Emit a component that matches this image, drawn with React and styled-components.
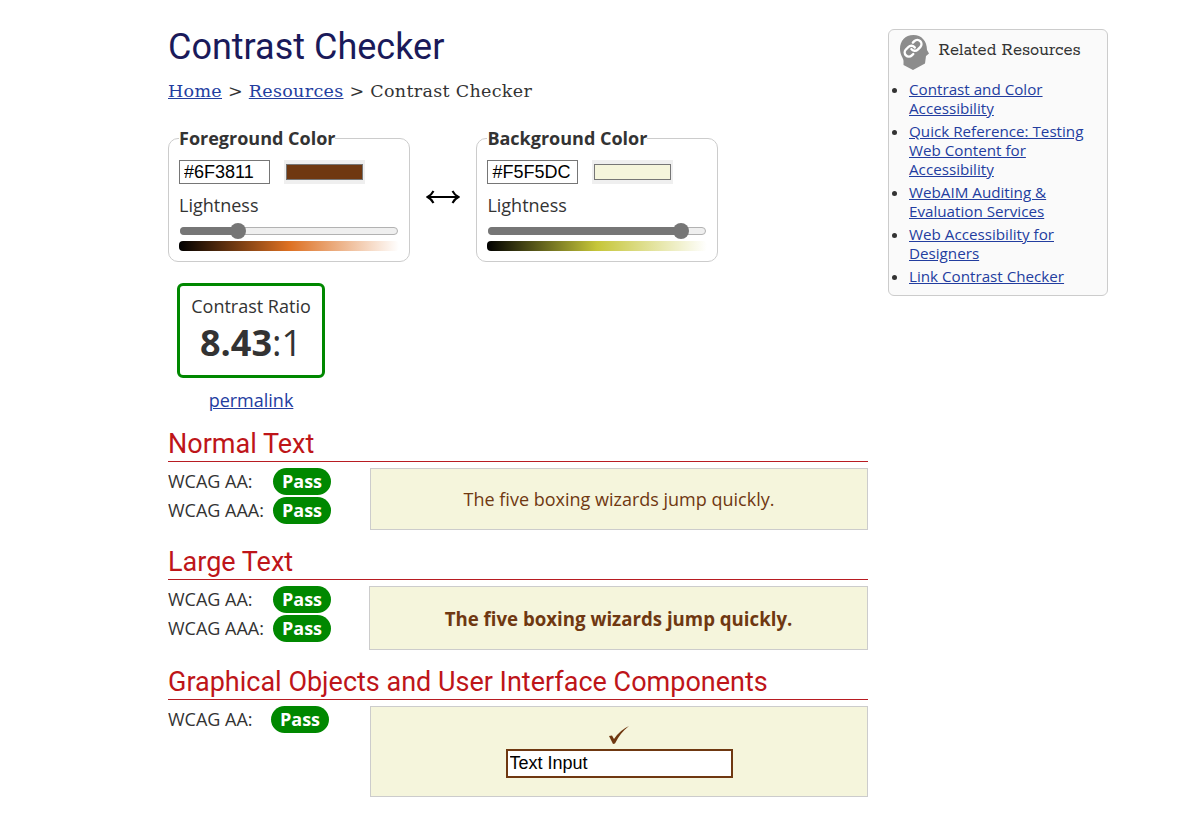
import React from "react";
import styled, { createGlobalStyle } from "styled-components";

const Global = createGlobalStyle`
  * { box-sizing: border-box; }
  body { margin: 0; background: #fff; color: #333; font: 18px/27px "Open Sans", sans-serif; }
  a { color: #233d9f; text-decoration: underline; }
`;
const Page = styled.div`
  width: 940px; height: 814px; margin-left: 168px; padding-top: 29px; overflow: hidden;
  display: flex; align-items: flex-start; gap: 20px;
`;
const Main = styled.main`width: 700px;`;
const Title = styled.h1`
  margin: 0; font: 400 36px/36px Roboto, sans-serif; color: #1a1a5a;
`;
const Crumbs = styled.nav`
  margin-top: 13px; height: 27px; font: 17.5px/27px "DejaVu Serif", serif; letter-spacing: 0.32px; white-space: nowrap;
`;
const Pickers = styled.div`display: flex; margin-top: 21px; height: 136px;`;
const Picker = styled.fieldset`
  width: 242px; height: 136px; margin: 0; padding: 0 10px; border: 1px solid #ccc; border-radius: 10px; min-width: 0;
`;
const Legend = styled.legend`padding: 0; font-weight: 700; line-height: 25px; height: 25px;`;
const Inputs = styled.div`display: flex; gap: 14px; margin-top: 9px;`;
const HexInput = styled.input`
  width: 91px; height: 24px; padding: 1px 4px; border: 1px solid #767676; background: #fff;
  font: 18px "Liberation Sans", sans-serif; color: #000; border-radius: 0;
`;
const SwatchFrame = styled.div`width: 81px; height: 24px; padding: 4px 2px; background: #efefef;`;
const Swatch = styled.div`height: 16px; border: 1px solid #767676; background: ${(p) => p.$color};`;
const Label = styled.div`margin-top: 8px; line-height: 27px;`;
const Slider = styled.div`display: flex; align-items: center; height: 16px; margin: 4px 1px 0;`;
const Track = styled.div`
  width: 218px; height: 8px; border: 1px solid #b2b2b2; border-radius: 4px; background: #efefef;
  display: flex; align-items: center;
`;
const Fill = styled.div`width: ${(p) => p.$width}px; height: 8px; margin-left: -1px; border-radius: 4px 0 0 4px; background: #767676; flex: none;`;
const Thumb = styled.div`width: 16px; height: 16px; margin-left: -8px; border-radius: 50%; background: #767676; flex: none;`;
const Ramp = styled.div`
  width: 220px; height: 10px; margin-top: 2px; border-radius: 4px;
  background: linear-gradient(to right, #000, ${(p) => p.$mid}, #fff);
`;
const Swap = styled.div`width: 66.4px; padding-top: 64px; display: flex; justify-content: center; align-items: flex-start;`;
const Ratio = styled.div`
  width: 148px; height: 95px; margin: 21px 0 0 9px; border: 3px solid #008800; border-radius: 6px;
  padding-top: 7px; text-align: center; line-height: 27px;
`;
const RatioValue = styled.div`font-size: 36px; line-height: 46px;`;
const Permalink = styled.div`width: 148px; margin: 9px 0 0 9px; text-align: center;`;
const Heading = styled.h2`
  margin: ${(p) => p.$top}px 0 0; height: 37px; border-bottom: 1px solid #b81c22; color: #be1519;
  font: 400 27px/38px Roboto, sans-serif;
`;
const Result = styled.div`display: flex; justify-content: space-between; align-items: flex-start; padding-top: 6px;`;
const Level = styled.div`display: flex; height: 29px; line-height: 27px;`;
const LevelName = styled.div`width: ${(p) => p.$width || 105}px;`;
const Pass = styled.div`
  width: 58px; height: 27px; border-radius: 13.5px; background: #008800; color: #fff; font-weight: 700; text-align: center;
`;
const Sample = styled.div`
  width: ${(p) => p.$width || 498}px; height: ${(p) => p.$height}px; border: 1px solid #ccc; background: #f5f5dc;
  color: #6f3811; font-weight: ${(p) => (p.$bold ? 700 : 400)}; font-size: ${(p) => p.$size || 18}px;
  display: flex; flex-direction: column; align-items: center; justify-content: center;
`;
const ControlSample = styled(Sample)`justify-content: flex-start; padding-top: 19px;`;
const TextField = styled.input`
  width: 227px; height: 29px; margin-top: 4px; padding: 1px 2px; border: 2px solid #6f3811; border-radius: 0;
  background: #fff; color: #000; font: 18px "Liberation Sans", sans-serif;
`;
const Aside = styled.aside`
  width: 220px; height: 267px; border: 1px solid #ccc; border-radius: 6px; background: #fafafa;
  font-size: 15.2px; line-height: 19px;
`;
const AsideTitle = styled.h2`
  display: flex; gap: 9.5px; margin: 0; padding: 5px 0 0 10px; height: 50px; white-space: nowrap;
  font: 400 18.4px/31px Rokkitt, "DejaVu Serif", serif;
`;
const Links = styled.ul`margin: 0; padding: 0 10px 0 20px;`;
const LinkItem = styled.li`margin-bottom: 4px;`;

function ColorPicker({ name, hex, mid, fill }) {
  return (
    <Picker>
      <Legend>{name}</Legend>
      <Inputs>
        <HexInput defaultValue={hex} />
        <SwatchFrame><Swatch $color={hex} /></SwatchFrame>
      </Inputs>
      <Label>Lightness</Label>
      <Slider><Track><Fill $width={fill} /><Thumb /></Track></Slider>
      <Ramp $mid={mid} />
    </Picker>
  );
}

const resources = [
  "Contrast and Color Accessibility",
  "Quick Reference: Testing Web Content for Accessibility",
  "WebAIM Auditing & Evaluation Services",
  "Web Accessibility for Designers",
  "Link Contrast Checker",
];
const sentence = "The five boxing wizards jump quickly.";

function Levels({ names, width }) {
  return (
    <div>
      {names.map((n) => (
        <Level key={n}><LevelName $width={width}>{n}</LevelName><Pass>Pass</Pass></Level>
      ))}
    </div>
  );
}

export default function App() {
  return (
    <>
      <Global />
      <Page>
        <Main>
          <Title>Contrast Checker</Title>
          <Crumbs><a href="#">Home</a> &gt; <a href="#">Resources</a> &gt; Contrast Checker</Crumbs>
          <Pickers>
            <ColorPicker name="Foreground Color" hex="#6F3811" mid="#dd7022" fill={58} />
            <Swap>
              <svg width="34" height="14" viewBox="0 0 34 14" fill="none" stroke="#000" strokeWidth="2">
                <path d="M1.5 7H32.5M7.5 1Q5.500 5 1.500 7Q5.500 9 7.500 13M26.500 1Q28.500 5 32.500 7Q28.500 9 26.500 13" />
              </svg>
            </Swap>
            <ColorPicker name="Background Color" hex="#F5F5DC" mid="#c6c639" fill={193} />
          </Pickers>
          <Ratio>Contrast Ratio<RatioValue><b>8.43</b>:1</RatioValue></Ratio>
          <Permalink><a href="#">permalink</a></Permalink>
          <Heading $top={11}>Normal Text</Heading>
          <Result>
            <Levels names={["WCAG AA:", "WCAG AAA:"]} />
            <Sample $height={62}>{sentence}</Sample>
          </Result>
          <Heading $top={13}>Large Text</Heading>
          <Result>
            <Levels names={["WCAG AA:", "WCAG AAA:"]} />
            <Sample $height={64} $width={499} $bold $size={18.67}>{sentence}</Sample>
          </Result>
          <Heading $top={13}>Graphical Objects and User Interface Components</Heading>
          <Result>
            <Levels names={["WCAG AA:"]} width={103} />
            <ControlSample $height={91}>
              <svg width="20" height="19" viewBox="0 0 20 19" fill="#6f3811">
                <path d="M0 10 3 9.500 5 13Q11 4 20 0Q11 7 6 17.500L4 18Z" />
              </svg>
              <TextField defaultValue="Text Input" />
            </ControlSample>
          </Result>
        </Main>
        <Aside>
          <AsideTitle>
            <svg width="30" height="36" viewBox="0 0 30 36" fill="none">
              <path d="M14.500 0C6 0 1 6 1 14C1 20 4.500 23 4.500 26V30L14 35L26 28.500L27 21L30 18.500L28 15C28 6 22.500 0 14.500 0Z" fill="#8c8c8c" />
              <g transform="translate(4 3.200) scale(.84)" stroke="#fff" strokeWidth="2.900" strokeLinecap="round">
                <path d="M10 13a5 5 0 0 0 7.540.540l3-3a5 5 0 0 0-7.070-7.070l-1.720 1.710" />
                <path d="M14 11a5 5 0 0 0-7.540-.540l-3 3a5 5 0 0 0 7.070 7.070l1.710-1.710" />
              </g>
            </svg>
            Related Resources
          </AsideTitle>
          <Links>{resources.map((r) => <LinkItem key={r}><a href="#">{r}</a></LinkItem>)}</Links>
        </Aside>
      </Page>
    </>
  );
}
